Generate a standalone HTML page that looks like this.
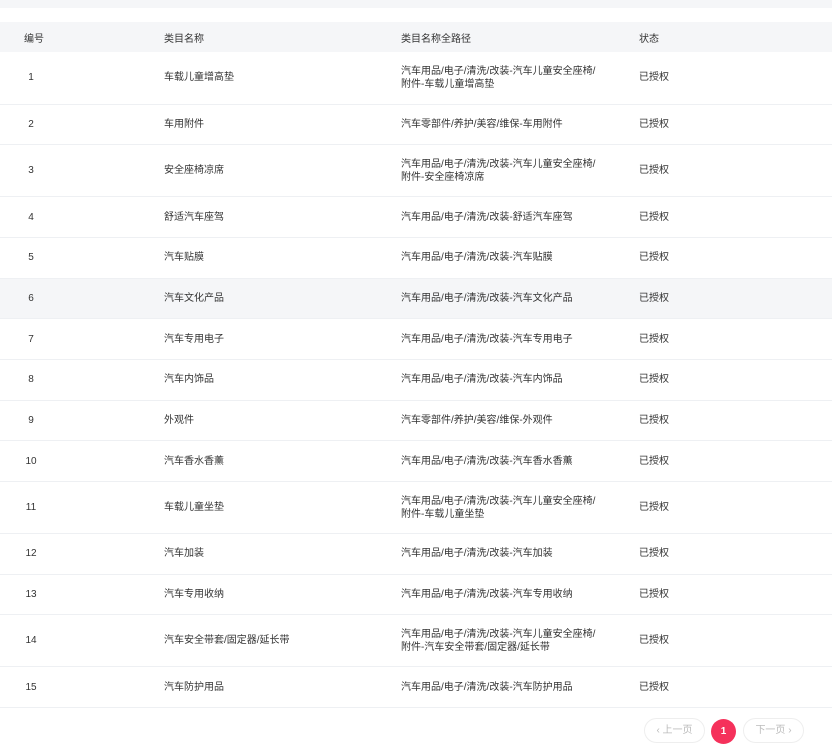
<!DOCTYPE html>
<html><head><meta charset="utf-8"><style>
*{margin:0;padding:0;box-sizing:border-box}
body{width:832px;height:749px;background:#fff;font-family:"Liberation Sans","Noto Sans CJK SC",sans-serif;font-size:10px;color:#333;position:relative;overflow:hidden}
.top{position:absolute;left:0;top:0;width:832px;height:8px;background:#f5f6f8}
table{position:absolute;left:0;top:22px;width:832px;border-collapse:collapse;table-layout:fixed}
th{background:#f5f6f8;height:30px;font-weight:normal;text-align:left;color:#333}
td{border-bottom:1px solid #eef0f3;height:40.7px;line-height:13px;vertical-align:middle}
tr.d td{height:52px}
tr.h td{background:#f5f6f8}
th,td{padding:0}
.c1{width:164px;padding-left:24px}
.c1 span{display:inline-block;width:14px;text-align:center}
.c2{width:237px}.c3{width:238px}
.pg{position:absolute;top:718px;height:25px;border:1px solid #eee;border-radius:13px;color:#bbb;font-size:10px;line-height:23px;text-align:center}
.cur{position:absolute;left:711px;top:719px;width:25px;height:25px;border-radius:50%;background:#f5315b;color:#fff;font-weight:bold;text-align:center;line-height:25px;font-size:10px}
</style></head><body>
<div class="top"></div>
<table>
<tr><th class="c1">编号</th><th class="c2">类目名称</th><th class="c3">类目名称全路径</th><th>状态</th></tr>
<tr class="d"><td class="c1"><span>1</span></td><td>车载儿童增高垫</td><td>汽车用品/电子/清洗/改装-汽车儿童安全座椅/<br>附件-车载儿童增高垫</td><td>已授权</td></tr>
<tr><td class="c1"><span>2</span></td><td>车用附件</td><td>汽车零部件/养护/美容/维保-车用附件</td><td>已授权</td></tr>
<tr class="d"><td class="c1"><span>3</span></td><td>安全座椅凉席</td><td>汽车用品/电子/清洗/改装-汽车儿童安全座椅/<br>附件-安全座椅凉席</td><td>已授权</td></tr>
<tr><td class="c1"><span>4</span></td><td>舒适汽车座驾</td><td>汽车用品/电子/清洗/改装-舒适汽车座驾</td><td>已授权</td></tr>
<tr><td class="c1"><span>5</span></td><td>汽车贴膜</td><td>汽车用品/电子/清洗/改装-汽车贴膜</td><td>已授权</td></tr>
<tr class="h"><td class="c1"><span>6</span></td><td>汽车文化产品</td><td>汽车用品/电子/清洗/改装-汽车文化产品</td><td>已授权</td></tr>
<tr><td class="c1"><span>7</span></td><td>汽车专用电子</td><td>汽车用品/电子/清洗/改装-汽车专用电子</td><td>已授权</td></tr>
<tr><td class="c1"><span>8</span></td><td>汽车内饰品</td><td>汽车用品/电子/清洗/改装-汽车内饰品</td><td>已授权</td></tr>
<tr><td class="c1"><span>9</span></td><td>外观件</td><td>汽车零部件/养护/美容/维保-外观件</td><td>已授权</td></tr>
<tr><td class="c1"><span>10</span></td><td>汽车香水香薰</td><td>汽车用品/电子/清洗/改装-汽车香水香薰</td><td>已授权</td></tr>
<tr class="d"><td class="c1"><span>11</span></td><td>车载儿童坐垫</td><td>汽车用品/电子/清洗/改装-汽车儿童安全座椅/<br>附件-车载儿童坐垫</td><td>已授权</td></tr>
<tr><td class="c1"><span>12</span></td><td>汽车加装</td><td>汽车用品/电子/清洗/改装-汽车加装</td><td>已授权</td></tr>
<tr><td class="c1"><span>13</span></td><td>汽车专用收纳</td><td>汽车用品/电子/清洗/改装-汽车专用收纳</td><td>已授权</td></tr>
<tr class="d"><td class="c1"><span>14</span></td><td>汽车安全带套/固定器/延长带</td><td>汽车用品/电子/清洗/改装-汽车儿童安全座椅/<br>附件-汽车安全带套/固定器/延长带</td><td>已授权</td></tr>
<tr><td class="c1"><span>15</span></td><td>汽车防护用品</td><td>汽车用品/电子/清洗/改装-汽车防护用品</td><td>已授权</td></tr>
</table>
<div class="pg" style="left:644px;width:61px">‹ 上一页</div>
<div class="cur">1</div>
<div class="pg" style="left:743px;width:61px">下一页 ›</div>
</body></html>
